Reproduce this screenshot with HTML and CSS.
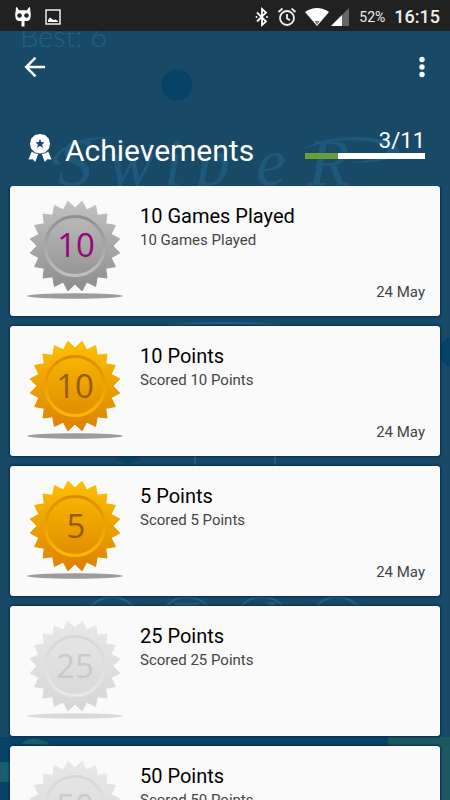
FILE: index.html
```html
<!DOCTYPE html>
<html lang="en">
<head>
<meta charset="utf-8">
<meta name="viewport" content="width=device-width, initial-scale=1">
<title>Achievements</title>
<link rel="stylesheet" href="styles.css">
</head>
<body>
<svg class="defs" aria-hidden="true">
  <defs>
    <linearGradient id="silver" x1="0" y1="0" x2="0" y2="1"><stop offset="0" stop-color="#c2c2c2"/><stop offset="1" stop-color="#8c8c8c"/></linearGradient>
    <linearGradient id="silver-ring" x1="0" y1="0" x2="0" y2="1"><stop offset="0" stop-color="#8e8e8e"/><stop offset="1" stop-color="#c0c0c0"/></linearGradient>
    <linearGradient id="gold" x1="0" y1="0" x2="0" y2="1"><stop offset="0" stop-color="#fcc000"/><stop offset="1" stop-color="#dc8200"/></linearGradient>
    <linearGradient id="gold-ring" x1="0" y1="0" x2="0" y2="1"><stop offset="0" stop-color="#dc8a00"/><stop offset="1" stop-color="#fcba04"/></linearGradient>
    <linearGradient id="locked" x1="0" y1="0" x2="0" y2="1"><stop offset="0" stop-color="#e8e8e8"/><stop offset="1" stop-color="#d6d6d6"/></linearGradient>
    <linearGradient id="locked-ring" x1="0" y1="0" x2="0" y2="1"><stop offset="0" stop-color="#d7d7d7"/><stop offset="1" stop-color="#e8e8e8"/></linearGradient>
    <symbol id="medal" viewBox="-50 -50 100 104">
      <ellipse class="medal-shadow" cx="0" cy="50" rx="48" ry="2.7"/>
      <polygon class="medal-body" points="0,-38 7.1,-44.8 11.7,-36.1 20.6,-40.4 22.3,-30.7 32,-32 30.7,-22.3 40.4,-20.6 36.1,-11.7 44.8,-7.1 38,0 44.8,7.1 36.1,11.7 40.4,20.6 30.7,22.3 32,32 22.3,30.7 20.6,40.4 11.7,36.1 7.1,44.8 0,38 -7.1,44.8 -11.7,36.1 -20.6,40.4 -22.3,30.7 -32,32 -30.7,22.3 -40.4,20.6 -36.1,11.7 -44.8,7.1 -38,0 -44.8,-7.1 -36.1,-11.7 -40.4,-20.6 -30.7,-22.3 -32,-32 -22.3,-30.7 -20.6,-40.4 -11.7,-36.1 -7.1,-44.8"/>
      <circle class="medal-ring" r="29.5"/>
    </symbol>
  </defs>
</svg>

<div class="app">
  <div class="statusbar">
    <svg class="status-icon" width="18" height="22" viewBox="0 0 18 22" aria-hidden="true">
      <path fill="#fff" d="M2 1l1.200.5L5 4.200h8l1.800-2.700L16 1l.3 4Q17 7 16.600 11q-.3 3.500-3.100 4h-3v5.500h-3V15h-3q-2.800-.5-3.100-4Q1 7 1.700 5z"/>
      <circle cx="5.500" cy="9.500" r="2.300" fill="#212121"/><circle cx="12.500" cy="9.500" r="2.300" fill="#212121"/>
    </svg>
    <svg class="gallery" width="16" height="16" viewBox="0 0 16 16" aria-hidden="true">
      <rect x="1" y="1" width="14" height="14" fill="none" stroke="#eee" stroke-width="1.500"/><path fill="#fff" d="M3 13v-2l2-2.500 2 1.500 1.500 1 2-.5L13 12v1z"/>
    </svg>
    <span class="spacer"></span>
    <svg width="14" height="20" viewBox="0 0 14 20" fill="none" stroke="#fff" stroke-width="1.800" aria-hidden="true"><path d="M2 5.500l9 9L7 18V2l4 3.500-9 9"/><path d="M1.500 10h.01M12 10h.01" stroke-width="2" stroke-linecap="round"/></svg>
    <svg class="alarm" width="20" height="20" viewBox="0 0 20 20" fill="none" stroke="#eee" stroke-width="1.800" aria-hidden="true"><circle cx="10" cy="11" r="7"/><path d="M10 7v4.500l3 1.800M1.500 5l4-3.500M18.500 5l-4-3.500"/></svg>
    <svg class="wifi" width="24" height="18" viewBox="0 0 24 18" aria-hidden="true"><path fill="#fff" d="M0 4Q12-4 24 4L12 18z"/><path fill="#777" d="M9.500 13h5L12 17z"/></svg>
    <svg class="cell" width="18" height="18" viewBox="0 0 18 18" aria-hidden="true"><path fill="#666" d="M18 0v18H0z"/><path fill="#fff" d="M11 7v11H0z"/></svg>
    <span class="battery">52%</span>
    <time class="clock">16:15</time>
  </div>

  <div class="screen">
    <svg class="backdrop" viewBox="0 0 450 769" preserveAspectRatio="xMidYMin slice" aria-hidden="true">
      <text class="best" x="20" y="16">Best: 6</text>
      <circle cx="177" cy="54" r="15.500" fill="#054467"/>
      <g class="logo">
        <text x="58 108 164 196 256 308" y="154">SwipeR</text>
        <path d="M115 106q-45-2-61 20-5 10 8 7q-10-5 3-14 16-10 50-13z"/>
        <path d="M302 119q20-14 60-13 38 3 37 14-4 12-50 12q40-5 38-13-3-9-36-10-30 1-49 10z"/>
      </g>
      <circle cx="455" cy="321" r="15.500" fill="#054467"/>
      <circle cx="128" cy="417" r="15.500" fill="#054467"/>
      <g fill="none" stroke="#205f84" stroke-width="2">
        <path d="M168 295q52-6 114 0M195 425v10M275 425v10"/>
        <circle cx="112" cy="594" r="28"/><circle cx="187" cy="594" r="28"/><circle cx="262" cy="594" r="28"/><circle cx="337" cy="594" r="28"/>
      </g>
      <path fill="#205f84" d="M175 572h24v3h-24z"/><circle cx="272" cy="576" r="5" fill="#205f84"/>
      <path fill="#08436a" d="M0 706h388v63H0z"/><path fill="#1c5860" d="M388 706h62v63h-62z"/>
      <path fill="#185f70" d="M0 731h10v20H0z"/><path fill="#195e68" d="M22 713q4-6 14-5 9 1 14 6z"/>
    </svg>

    <nav class="toolbar">
      <button class="icon-button" type="button" aria-label="Back"><svg width="24" height="24" viewBox="0 0 24 24" fill="none" stroke="#fff" stroke-width="2.500"><path d="M22 12H4M12.500 2.700L3.200 12l9.300 9.300"/></svg></button>
      <button class="icon-button" type="button" aria-label="More options"><svg width="24" height="24" viewBox="0 0 24 24" fill="#fff"><circle cx="12" cy="4.500" r="2.700"/><circle cx="12" cy="12" r="2.700"/><circle cx="12" cy="19.500" r="2.700"/></svg></button>
    </nav>

    <header class="heading">
      <svg class="badge" width="24" height="28" viewBox="0 0 24 28" aria-hidden="true">
        <path fill="#fff" fill-rule="evenodd" d="M12 0l2.500.5 2.600.6 1.900 1.800 1.900 1.900.6 2.600.5 2.300-.5 2.600-.6 2.500-1.900 1.800-1.900 1.900-2.600.6-2.500.5-2.500-.5-2.600-.6L5 16.600l-1.900-1.800-.6-2.500L2 9.700l.5-2.300.6-2.600L5 2.900l1.900-1.800L9.500.5zM12 5l-1.300 3.100-3.300.3 2.500 2.200-.7 3.200L12 12.100l2.800 1.700-.7-3.200 2.500-2.200-3.300-.3z"/>
        <path fill="#fff" d="M3.800 17.500l2.700 1.700 3.700.8-3 8-2.500-2.800-4.300.3zM20.200 17.500l-2.700 1.700-3.700.8 3 8 2.500-2.800 4.300.3z"/>
      </svg>
      <h1>Achievements</h1>
      <div class="progress">
        <span class="count" id="count">3/11</span>
        <progress value="3" max="11" aria-labelledby="count"></progress>
      </div>
    </header>

    <main class="list">
      <article class="card silver">
        <svg class="medal" viewBox="-50 -50 100 104" aria-hidden="true"><use href="#medal" x="-50" y="-50" width="100" height="104"/><text x="1" y="11">10</text></svg>
        <div class="info"><h2>10 Games Played</h2><p>10 Games Played</p><time>24 May</time></div>
      </article>
      <article class="card gold">
        <svg class="medal" viewBox="-50 -50 100 104" aria-hidden="true"><use href="#medal" x="-50" y="-50" width="100" height="104"/><text x="0" y="12">10</text></svg>
        <div class="info"><h2>10 Points</h2><p>Scored 10 Points</p><time>24 May</time></div>
      </article>
      <article class="card gold">
        <svg class="medal" viewBox="-50 -50 100 104" aria-hidden="true"><use href="#medal" x="-50" y="-50" width="100" height="104"/><text x="1" y="12">5</text></svg>
        <div class="info"><h2>5 Points</h2><p>Scored 5 Points</p><time>24 May</time></div>
      </article>
      <article class="card locked">
        <svg class="medal" viewBox="-50 -50 100 104" aria-hidden="true"><use href="#medal" x="-50" y="-50" width="100" height="104"/><text x="0" y="12">25</text></svg>
        <div class="info"><h2>25 Points</h2><p>Scored 25 Points</p></div>
      </article>
      <article class="card locked">
        <svg class="medal" viewBox="-50 -50 100 104" aria-hidden="true"><use href="#medal" x="-50" y="-50" width="100" height="104"/><text x="0" y="12">50</text></svg>
        <div class="info"><h2>50 Points</h2><p>Scored 50 Points</p></div>
      </article>
    </main>
  </div>
</div>
</body>
</html>
```
FILE: styles.css
```css
* { box-sizing: border-box; margin: 0; padding: 0; }
body { font-family: Roboto, "Liberation Sans", sans-serif; background: #184a68; color: #000; }
h1, h2 { font-weight: 400; }
.defs { position: absolute; width: 0; height: 0; }
.app { height: 100vh; display: flex; flex-direction: column; overflow: hidden; }

.statusbar { display: flex; align-items: center; height: 31px; flex: none; padding: 2px 10px 0 14px; background: #212121; color: #eee; }
.gallery { margin-left: 13px; }
.spacer { flex: 1; }
.alarm { margin-left: 8px; }
.wifi { margin-left: 8px; }
.cell { margin-left: 2px; }
.battery { margin-left: 10px; font-size: 14px; }
.clock { margin-left: 9px; font-size: 18px; font-weight: 500; }

.screen { position: relative; flex: 1; min-height: 0; overflow: hidden; display: flex; flex-direction: column; }
.backdrop { position: absolute; inset: 0; width: 100%; height: 100%; }
.best { font: 300 29px Lato, sans-serif; fill: #205f84; }
.logo { fill: #1e587a; }
.logo text { font: italic 68px "Liberation Serif", serif; }

.toolbar, .heading, .list { position: relative; }
.toolbar { display: flex; justify-content: space-between; padding: 16px 8px 0 15px; }
.icon-button { display: grid; place-items: center; width: 40px; height: 40px; border: 0; background: none; }

.heading { display: flex; align-items: flex-end; padding: 0 25px 18px 28px; height: 99px; color: #fff; }
.badge { margin-bottom: 6px; }
.heading h1 { margin-left: 13px; font-size: 30px; line-height: 34px; flex: 1; }
.progress { width: 120px; display: flex; flex-direction: column; align-items: flex-end; margin-bottom: 9px; }
.count { font-size: 22px; line-height: 24px; }
progress { appearance: none; display: block; width: 100%; height: 6px; border: 0; background: #fff; }
progress::-webkit-progress-bar { background: #fff; }
progress::-webkit-progress-value { background: #689f38; }

.list { display: flex; flex-direction: column; gap: 10px; padding: 0 10px; flex: 1; min-height: 0; overflow-y: auto; scrollbar-width: none; }
.card { flex: none; display: flex; min-height: 130px; padding: 10px 15px; gap: 15px; border-radius: 3px; background: #fafafa; box-shadow: 0 0 2px 1px #062a52; }
.medal { flex: none; width: 100px; height: 104px; }
.info { flex: 1; display: flex; flex-direction: column; }
.info h2 { margin-top: 8px; font-size: 20px; line-height: 24px; }
.info p { font-size: 15px; line-height: 24px; color: #444; }
.info time { margin-top: auto; align-self: flex-end; font-size: 15px; line-height: 28px; color: #444; }

.medal text { font: 33px "Open Sans", sans-serif; text-anchor: middle; fill: var(--ink); }
.medal-body { fill: var(--body); stroke: var(--body); stroke-linejoin: round; }
.medal-ring { fill: none; stroke: var(--ring); stroke-width: 3px; }
.medal-shadow { fill: var(--shadow); }
.silver { --body: url(#silver); --ring: url(#silver-ring); --ink: #95057c; --shadow: #9c9c9c; }
.gold { --body: url(#gold); --ring: url(#gold-ring); --ink: #945c00; --shadow: #9c9c9c; }
.locked { --body: url(#locked); --ring: url(#locked-ring); --ink: #cacaca; --shadow: #dbdbdb; }
```
